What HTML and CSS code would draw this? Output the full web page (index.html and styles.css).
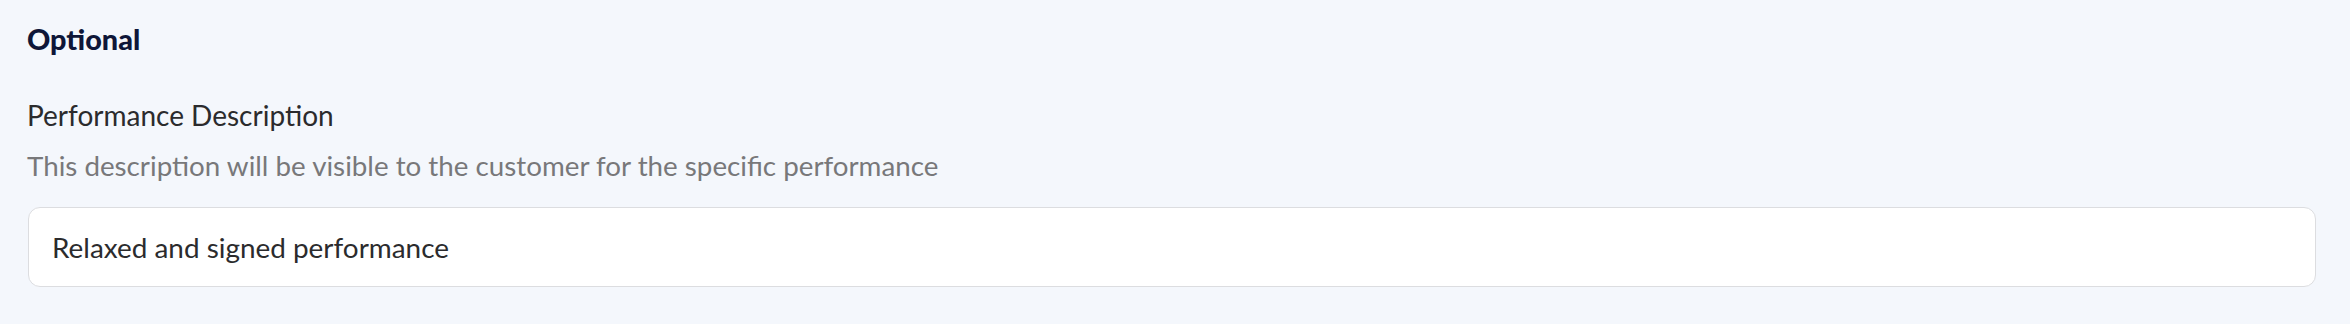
FILE: index.html
```html
<!DOCTYPE html>
<html lang="en">
<head>
<meta charset="utf-8">
<title>Optional</title>
<link rel="stylesheet" href="styles.css">
</head>
<body>
<section class="section">
  <h2 class="section-title">Optional</h2>
  <div class="field">
    <label class="field-label" for="perf-desc">Performance Description</label>
    <p class="field-help">This description will be visible to the customer for the specific performance</p>
    <input class="text-input" id="perf-desc" type="text" value="Relaxed and signed performance">
  </div>
</section>
</body>
</html>
```

FILE: styles.css
```css
html, body {
  margin: 0;
  padding: 0;
  background: #f4f7fc;
}
body {
  font-family: Lato, "Noto Sans", sans-serif;
  width: 2350px;
  height: 324px;
  overflow: hidden;
}
.section {
  padding: 23px 34px 0 27px;
  display: flex;
  flex-direction: column;
}
.section-title {
  margin: 0;
  font-size: 28.8px;
  line-height: 32px;
  font-weight: 900;
  color: #0e1638;
}
.field {
  display: flex;
  flex-direction: column;
  margin-top: 44px;
}
.field-label {
  font-size: 28px;
  line-height: 32px;
  color: #2b2b2d;
}
.field-help {
  margin: 19px 0 0;
  font-size: 27.75px;
  line-height: 32px;
  color: #78787a;
}
.text-input {
  margin: 25px 0 0 1px;
  box-sizing: border-box;
  height: 80px;
  width: 2288px;
  padding: 0 0 0 23px;
  border: 1.5px solid #dcdde0;
  border-radius: 12px;
  background: #ffffff;
  font-family: Lato, "Noto Sans", sans-serif;
  font-size: 27.9px;
  color: #2b2b2d;
  outline: none;
}
```
